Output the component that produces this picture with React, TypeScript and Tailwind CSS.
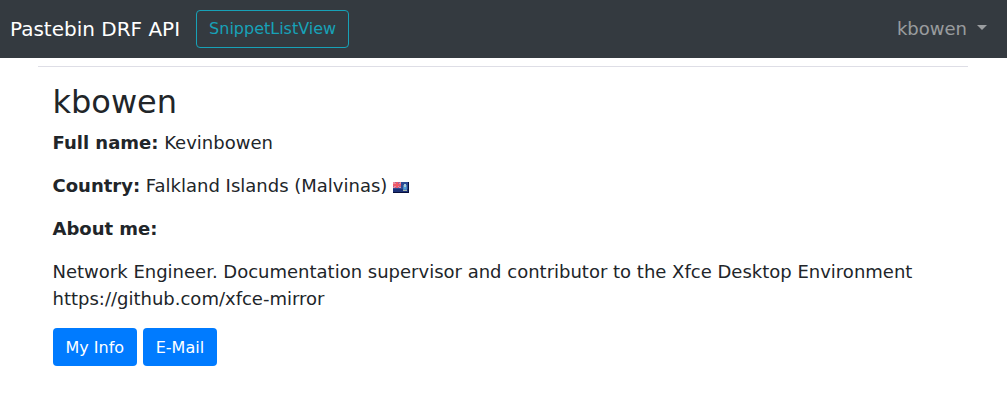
export default function App() {
  return (
    <div className="min-h-screen bg-white font-['DejaVu_Sans',sans-serif] text-[18px] leading-[27px] text-[#212529]">
      <nav className="flex h-[58px] items-center bg-[#343a40] px-[10px]">
        <a className="mr-4 text-[20px] leading-[30px] text-white">Pastebin DRF API</a>
        <button className="h-[38px] rounded border border-[#17a2b8] px-3 text-[16px] leading-6 text-[#17a2b8]">SnippetListView</button>
        <a className="mr-[10px] ml-auto flex items-center pb-[2px] text-white/50">
          kbowen
          <span className="mb-[2px] ml-[10px] border-x-[5.4px] border-t-[5.4px] border-x-transparent border-t-white/50" />
        </a>
      </nav>
      <main className="mr-[39px] ml-[38px] pt-2">
        <div className="border-t border-[#dedee6] pt-4 pl-[14.5px]">
          <h2 className="mb-2 text-[32px] leading-[38px]">kbowen</h2>
          <p className="mb-4"><b>Full name:</b> Kevinbowen</p>
          <p className="mb-4">
            <b>Country:</b> Falkland Islands (Malvinas){' '}
            <svg className="inline-block h-[11px] w-4 align-[-1px]" viewBox="0 0 16 11" shapeRendering="crispEdges">
              <rect width="16" height="11" fill="#08103c" />
              <rect width="15" height="10" fill="#2c4a94" />
              <path d="M0 7h15v3H0z" fill="#1c3178" />
              <path d="M0 0h8v6H0z" fill="#a4659c" />
              <path d="M0 0h2v1h1v1h3V1h1V0h1v2H7v1h1v1H6v1h2v1H6V5H5V4H3v1H2v1H0V5h1V4H0V3h1V2H0z" fill="#ee8a9a" />
              <path d="M0 2h8v2H0zM3 0h2v6H3z" fill="#ef5a68" />
              <path d="M10 3h4v5h-4z" fill="#5285bb" />
              <path d="M11 2h2v3h-2z" fill="#a9cbd6" />
              <path d="M11 5h2v2h-2z" fill="#4ca0dc" />
              <path d="M10 8h4v1h-4z" fill="#a8b8a8" />
            </svg>
          </p>
          <p className="mb-4"><b>About me:</b></p>
          <p className="mb-4">
            Network Engineer. Documentation supervisor and contributor to the Xfce Desktop Environment<br />
            https://github.com/xfce-mirror
          </p>
          <div className="flex gap-[5.6px] text-[16px] leading-6 text-white">
            <button className="h-[38px] rounded bg-[#007bff] px-[13px] pt-[2px]">My Info</button>
            <button className="h-[38px] rounded bg-[#007bff] px-[13px] pt-[2px]">E-Mail</button>
          </div>
        </div>
      </main>
    </div>
  );
}
